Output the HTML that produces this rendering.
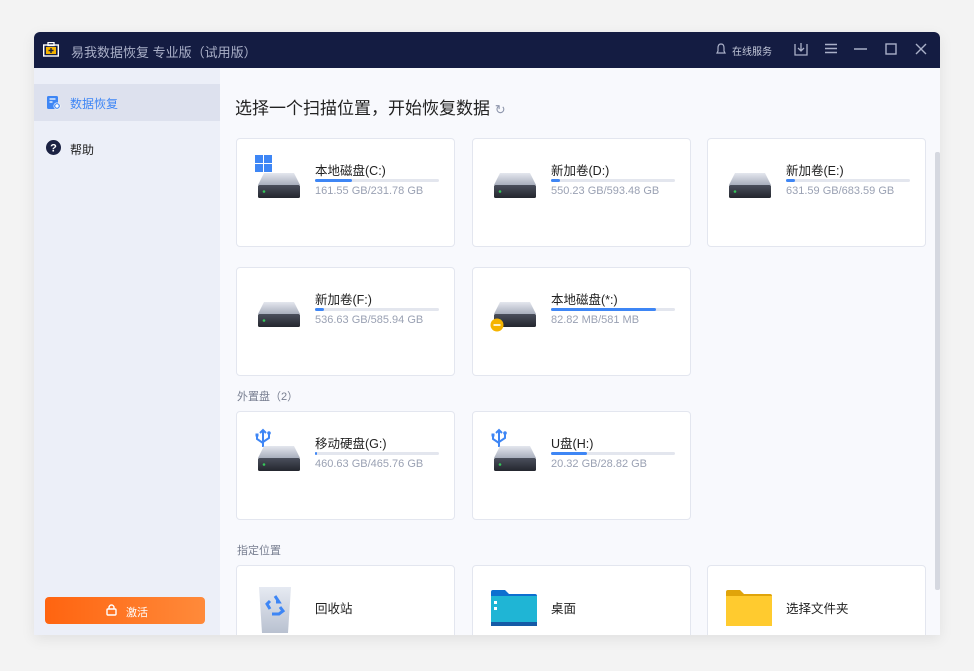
<!DOCTYPE html>
<html><head><meta charset="utf-8"><style>
*{margin:0;padding:0;box-sizing:border-box}
body{width:974px;height:671px;background:#f3f3f3;font-family:"Liberation Sans","Noto Sans CJK SC",sans-serif;position:relative;overflow:hidden}
.win{position:absolute;left:34px;top:32px;width:906px;height:603px;background:#f8f9fd;border-radius:6px 6px 0 0;overflow:hidden;box-shadow:0 4px 14px rgba(0,0,0,.08)}
.tb{position:absolute;left:0;top:0;width:906px;height:36px;background:#141c42;color:#aab0c8;font-size:13px}
.side{position:absolute;left:0;top:36px;width:186px;height:567px;background:#eceff8}
.main{position:absolute;left:186px;top:36px;width:720px;height:567px}
.card{position:absolute;width:219px;height:109px;background:#fff;border:1px solid #e3e6ef;border-radius:4px}
.nm{position:absolute;left:78px;top:21px;font-size:12.5px;color:#222}
.bar{position:absolute;left:78px;top:40px;width:124px;height:3px;background:#e3e6ee;border-radius:2px}
.bar i{display:block;height:3px;background:#3e86f5;border-radius:2px}
.sz{position:absolute;left:78px;top:46px;font-size:11px;color:#9aa1b3}
.dr{position:absolute;left:20px;top:32px}
.lbl{position:absolute;font-size:11px;color:#777e90}
</style></head><body>
<div class="win">
 <div class="tb">
  <svg style="position:absolute;left:9px;top:10px" width="16" height="15" viewBox="0 0 16 15"><rect x="5" y="0.5" width="6" height="3" fill="none" stroke="#fff" stroke-width="1.3"/><rect x="0.7" y="3" width="14.6" height="11" fill="none" stroke="#fff" stroke-width="1.4"/><rect x="3" y="5" width="10" height="7" fill="#f5b400"/><path d="M8 6v5M5.5 8.5h5" stroke="#141c42" stroke-width="1.4"/></svg>
  <span style="position:absolute;left:37px;top:10px">易我数据恢复 专业版（试用版）</span>
  <svg style="position:absolute;left:682px;top:11px" width="10" height="12" viewBox="0 0 10 12"><path d="M5 1C2.5 1 2 3 2 5v3l-1 2h8l-1-2V5c0-2-.5-4-3-4z" fill="none" stroke="#aab0c8" stroke-width="1.2"/></svg>
  <span style="position:absolute;left:698px;top:11px;font-size:10px;color:#c5cadb">在线服务</span>
  <svg style="position:absolute;left:760px;top:10px" width="14" height="14" viewBox="0 0 14 14" fill="none" stroke="#aab0c8" stroke-width="1.3"><path d="M1 2v11h12V2M7 1v8M4 6l3 3 3-3"/></svg>
  <svg style="position:absolute;left:791px;top:11px" width="12" height="11" stroke="#aab0c8" stroke-width="1.4"><path d="M0 1.5h12M0 5.5h12M0 9.5h12"/></svg>
  <svg style="position:absolute;left:820px;top:11px" width="13" height="12" stroke="#aab0c8" stroke-width="1.4"><path d="M0 6h13"/></svg>
  <svg style="position:absolute;left:851px;top:11px" width="12" height="12" fill="none" stroke="#aab0c8" stroke-width="1.4"><rect x="1" y="1" width="10" height="10"/></svg>
  <svg style="position:absolute;left:881px;top:11px" width="12" height="12" stroke="#aab0c8" stroke-width="1.4"><path d="M1 1l10 10M11 1L1 11"/></svg>
 </div>
 <div class="side">
  <div style="position:absolute;left:0;top:16px;width:186px;height:37px;background:#dde1ee"></div>
  <svg style="position:absolute;left:13px;top:28px" width="14" height="14" viewBox="0 0 14 14"><rect x="0" y="0" width="11" height="13" rx="1.5" fill="#3e86f5"/><path d="M2.5 3h6M2.5 6h3" stroke="#fff" stroke-width="1.3"/><circle cx="10" cy="10" r="3.5" fill="#fff"/><circle cx="10" cy="10" r="2.3" fill="none" stroke="#3e86f5" stroke-width="1.2"/></svg>
  <span style="position:absolute;left:36px;top:27px;font-size:12px;color:#3e86f5">数据恢复</span>
  <svg style="position:absolute;left:12px;top:72px" width="15" height="15" viewBox="0 0 15 15"><circle cx="7.5" cy="7.5" r="7.5" fill="#1b2243"/><text x="7.5" y="11.5" font-size="11" font-weight="bold" fill="#fff" text-anchor="middle" font-family="Liberation Sans">?</text></svg>
  <span style="position:absolute;left:36px;top:73px;font-size:12px;color:#222">帮助</span>
  <div style="position:absolute;left:11px;top:529px;width:160px;height:27px;border-radius:4px;background:linear-gradient(90deg,#ff6410,#ff8a3a)">
   <svg style="position:absolute;left:61px;top:7px" width="11" height="12" viewBox="0 0 11 12" fill="none" stroke="#fff" stroke-width="1.4"><path d="M3 5V3.5a2.5 2.5 0 015 0V5"/><rect x="1" y="5" width="9" height="6" rx="1"/></svg>
   <span style="position:absolute;left:81px;top:7px;font-size:11px;color:#fff">激活</span>
  </div>
 </div>
 <div class="main">
  <div style="position:absolute;left:15px;top:26px;font-size:17px;color:#222">选择一个扫描位置，开始恢复数据 <span style="font-size:13px;color:#8d95ab">↻</span></div>
  <div style="position:absolute;left:715px;top:84px;width:5px;height:438px;background:#d5d8e0;border-radius:2px"></div>

  <div class="card" style="left:16px;top:70px">
   <svg style="position:absolute;left:18px;top:16px" width="18" height="18"><rect x="0" y="0" width="8" height="8" fill="#3e86f5"/><rect x="9" y="0" width="8" height="8" fill="#3e86f5"/><rect x="0" y="9" width="8" height="8" fill="#3e86f5"/><rect x="9" y="9" width="8" height="8" fill="#3e86f5"/></svg>
   <svg class="dr" width="44" height="26" style="top:34px"><use href="#drv"/></svg>
   <div class="nm">本地磁盘(C:)</div><div class="bar"><i style="width:37px"></i></div><div class="sz">161.55 GB/231.78 GB</div>
  </div>
  <div class="card" style="left:252px;top:70px"><svg class="dr" width="44" height="26" style="top:34px"><use href="#drv"/></svg>
   <div class="nm">新加卷(D:)</div><div class="bar"><i style="width:9px"></i></div><div class="sz">550.23 GB/593.48 GB</div></div>
  <div class="card" style="left:487px;top:70px"><svg class="dr" width="44" height="26" style="top:34px"><use href="#drv"/></svg>
   <div class="nm">新加卷(E:)</div><div class="bar"><i style="width:9px"></i></div><div class="sz">631.59 GB/683.59 GB</div></div>
  <div class="card" style="left:16px;top:199px"><svg class="dr" width="44" height="26" style="top:34px"><use href="#drv"/></svg>
   <div class="nm">新加卷(F:)</div><div class="bar"><i style="width:9px"></i></div><div class="sz">536.63 GB/585.94 GB</div></div>
  <div class="card" style="left:252px;top:199px"><svg class="dr" width="44" height="26" style="top:34px"><use href="#drv"/></svg>
   <svg style="position:absolute;left:17px;top:50px" width="14" height="14"><circle cx="7" cy="7" r="6.5" fill="#f5b400"/><path d="M3.5 7h7" stroke="#fff" stroke-width="1.6"/></svg>
   <div class="nm">本地磁盘(*:)</div><div class="bar"><i style="width:105px"></i></div><div class="sz">82.82 MB/581 MB</div></div>

  <div class="lbl" style="left:17px;top:320px">外置盘（2）</div>
  <div class="card" style="left:16px;top:343px">
   <svg style="position:absolute;left:18px;top:16px" width="16" height="20" viewBox="0 0 16 20" fill="none" stroke="#3e86f5" stroke-width="2"><path d="M8 19V2M5 5l3-3 3 3M2 8v3l6 4M14 6v4l-6 4"/><rect x="0.5" y="5.5" width="3" height="3" fill="#3e86f5" stroke="none"/><circle cx="14" cy="5" r="1.8" fill="#3e86f5" stroke="none"/></svg>
   <svg class="dr" width="44" height="26" style="top:34px"><use href="#drv"/></svg>
   <div class="nm">移动硬盘(G:)</div><div class="bar"><i style="width:2px"></i></div><div class="sz">460.63 GB/465.76 GB</div></div>
  <div class="card" style="left:252px;top:343px">
   <svg style="position:absolute;left:18px;top:16px" width="16" height="20" viewBox="0 0 16 20" fill="none" stroke="#3e86f5" stroke-width="2"><path d="M8 19V2M5 5l3-3 3 3M2 8v3l6 4M14 6v4l-6 4"/><rect x="0.5" y="5.5" width="3" height="3" fill="#3e86f5" stroke="none"/><circle cx="14" cy="5" r="1.8" fill="#3e86f5" stroke="none"/></svg>
   <svg class="dr" width="44" height="26" style="top:34px"><use href="#drv"/></svg>
   <div class="nm">U盘(H:)</div><div class="bar"><i style="width:36px"></i></div><div class="sz">20.32 GB/28.82 GB</div></div>

  <div class="lbl" style="left:17px;top:474px">指定位置</div>
  <div class="card" style="left:16px;top:497px">
   <svg style="position:absolute;left:21px;top:19px" width="34" height="48" viewBox="0 0 34 48"><defs><linearGradient id="bin" x1="0" y1="0" x2="0" y2="1"><stop offset="0" stop-color="#e6eaf2"/><stop offset="1" stop-color="#b9c1d0"/></linearGradient></defs><path d="M1 2h32l-3 46H4z" fill="url(#bin)"/><path d="M17 11l4 6h-3M12 24l-3-5 3-3M22 22l3 4-4 3h-7" fill="none" stroke="#3e86f5" stroke-width="3"/></svg>
   <div class="nm" style="top:32px">回收站</div></div>
  <div class="card" style="left:252px;top:497px">
   <svg style="position:absolute;left:18px;top:24px" width="46" height="36" viewBox="0 0 46 36"><path d="M0 2a2 2 0 012-2h12l4 4h26a2 2 0 012 2v4H0z" fill="#0d6fd0"/><path d="M0 6h46v30H0z" fill="#1fb5d5"/><rect x="0" y="32" width="46" height="4" fill="#155aa6"/><rect x="3" y="11" width="3" height="3" fill="#fff"/><rect x="3" y="17" width="3" height="3" fill="#fff"/></svg>
   <div class="nm" style="top:32px">桌面</div></div>
  <div class="card" style="left:487px;top:497px">
   <svg style="position:absolute;left:18px;top:24px" width="46" height="36" viewBox="0 0 46 36"><path d="M0 2a2 2 0 012-2h12l4 4h26a2 2 0 012 2v4H0z" fill="#e0a40a"/><path d="M0 6h46v30H0z" fill="#ffcb2f"/></svg>
   <div class="nm" style="top:32px">选择文件夹</div></div>
 </div>
</div>
<svg width="0" height="0" style="position:absolute"><defs>
 <linearGradient id="dt" x1="0" y1="0" x2="0" y2="1"><stop offset="0" stop-color="#e4e7ee"/><stop offset="1" stop-color="#a9afbd"/></linearGradient>
 <linearGradient id="db" x1="0" y1="0" x2="0" y2="1"><stop offset="0" stop-color="#4a4f5c"/><stop offset="1" stop-color="#23262e"/></linearGradient>
 <g id="drv"><path d="M7 0h30l6 12H1z" fill="url(#dt)"/><rect x="1" y="12" width="42" height="13" rx="1.5" fill="url(#db)"/><circle cx="7" cy="18.5" r="1.3" fill="#35c759"/></g>
</defs></svg>
</body></html>
